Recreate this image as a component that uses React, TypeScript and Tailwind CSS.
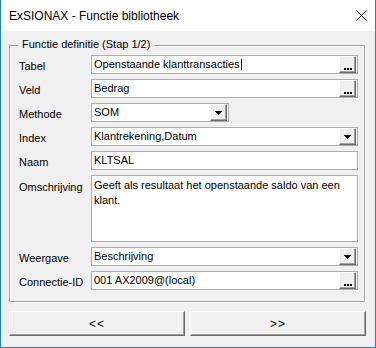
import React from "react";

const font = { fontFamily: '"Liberation Sans", Arial, sans-serif' };

function Dots() {
  return (
    <div className="flex gap-[1px] mt-[8px]">
      <div className="w-[2px] h-[2px] bg-black" />
      <div className="w-[2px] h-[2px] bg-black" />
      <div className="w-[2px] h-[2px] bg-black" />
    </div>
  );
}

function Arrow() {
  return (
    <div className="flex flex-col items-center">
      <div className="w-[7px] h-[1px] bg-black" />
      <div className="w-[5px] h-[1px] bg-black" />
      <div className="w-[3px] h-[1px] bg-black" />
      <div className="w-[1px] h-[1px] bg-black" />
    </div>
  );
}

function SmallBtn({ kind }: { kind: "dots" | "arrow" }) {
  return (
    <div className="w-[17px] h-[17px] mr-[1px] shrink-0 bg-[#f0f0f0] border-t border-l border-t-white border-l-white border-b border-r border-b-[#696969] border-r-[#696969] shadow-[inset_-1px_-1px_0_0_#a0a0a0] flex items-center justify-center">
      {kind === "dots" ? <Dots /> : <Arrow />}
    </div>
  );
}

function Field({
  value,
  btn,
  width,
  cursor,
}: {
  value: string;
  btn?: "dots" | "arrow";
  width?: string;
  cursor?: boolean;
}) {
  return (
    <div
      className={`${width ?? "w-[267px]"} h-[19px] bg-white border border-[#adadad] flex items-center`}
    >
      <div className="flex-1 pl-[2px] text-[11px] leading-[13px] text-black whitespace-nowrap overflow-hidden flex items-center">
        {value}
        {cursor && <span className="inline-block w-[1px] h-[11px] bg-black ml-[1px]" />}
      </div>
      {btn && <SmallBtn kind={btn} />}
    </div>
  );
}

function Row({ label, children, top }: { label: string; children: React.ReactNode; top?: boolean }) {
  return (
    <div className="flex">
      <div
        className={`w-[72px] shrink-0 text-[11px] leading-[13px] text-black ${top ? "pt-[6px]" : "pt-[5px]"}`}
      >
        {label}
      </div>
      {children}
    </div>
  );
}

function BigBtn({ label }: { label: string }) {
  return (
    <div className="w-[176px] h-[25px] bg-[#f0f0f0] border-t border-l border-t-white border-l-white border-b border-r border-b-[#696969] border-r-[#696969] shadow-[inset_-1px_-1px_0_0_#a0a0a0] flex items-center justify-center text-[12px] tracking-[1px] text-black">
      {label}
    </div>
  );
}

export default function App() {
  return (
    <div
      style={font}
      className="w-[376px] h-[348px] bg-[#f0f0f0] border-l border-r border-b border-[#1883d7] flex flex-col"
    >
      <div className="h-[31px] bg-white flex items-center justify-between pl-[8px] pr-[8px] shrink-0">
        <span className="text-[12px] text-black">ExSIONAX - Functie bibliotheek</span>
        <svg width="11" height="11" viewBox="0 0 11 11">
          <path d="M0.5 0.5 L10.5 10.5 M10.5 0.5 L0.5 10.5" stroke="#000" strokeWidth="1" fill="none" />
        </svg>
      </div>
      <div className="ml-[8px] mt-[14px] w-[356px] relative border border-[#a0a0a0] shadow-[inset_1px_1px_0_0_#fff,1px_1px_0_0_#fff] pl-[9px] pt-[9px] pb-[11px] flex flex-col gap-[5px]">
        <span className="absolute left-[8px] top-[-8px] px-[4px] bg-[#f0f0f0] text-[11px] leading-[13px] text-black">
          Functie definitie (Stap 1/2)
        </span>
        <Row label="Tabel">
          <Field value="Openstaande klanttransacties" btn="dots" cursor />
        </Row>
        <Row label="Veld">
          <Field value="Bedrag" btn="dots" />
        </Row>
        <Row label="Methode">
          <Field value="SOM" btn="arrow" width="w-[138px]" />
        </Row>
        <Row label="Index">
          <Field value="Klantrekening,Datum" btn="arrow" />
        </Row>
        <Row label="Naam">
          <Field value="KLTSAL" />
        </Row>
        <Row label="Omschrijving" top>
          <div className="w-[267px] h-[67px] bg-white border border-[#adadad] pl-[2px] pr-[2px] pt-[2px] text-[11px] leading-[15px] text-black">
            Geeft als resultaat het openstaande saldo van een klant.
          </div>
        </Row>
        <Row label="Weergave">
          <Field value="Beschrijving" btn="arrow" />
        </Row>
        <Row label="Connectie-ID">
          <Field value="001 AX2009@(local)" btn="dots" />
        </Row>
      </div>
      <div className="ml-[8px] mt-[9px] flex gap-[5px]">
        <BigBtn label="<<" />
        <BigBtn label=">>" />
      </div>
    </div>
  );
}
